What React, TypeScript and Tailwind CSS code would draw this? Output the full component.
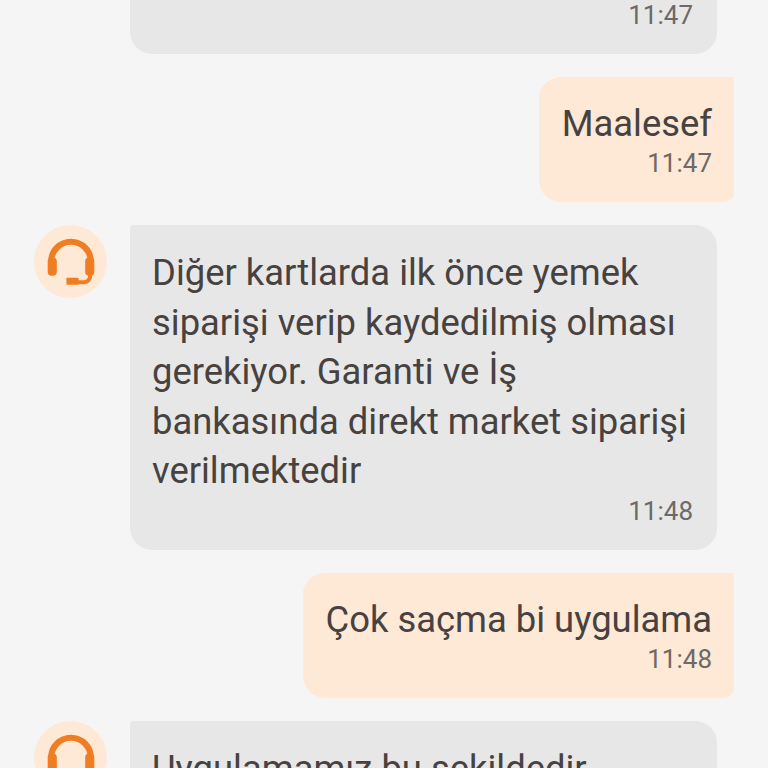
import React from 'react';

const Headset = () => (
  <svg viewBox="0 0 72 72" className="w-[73px] h-[73px]" fill="none">
    <path d="M17 38v-2a19.500 19.500 0 0 1 39 0v2" stroke="#ef7d22" strokeWidth="6" />
    <rect x="13.500" y="32" width="9" height="18" rx="4" fill="#ef7d22" />
    <rect x="50.500" y="32" width="9" height="18" rx="4" fill="#ef7d22" />
    <path d="M55.500 46v4a6.500 6.500 0 0 1-6.500 6.500H42" stroke="#ef7d22" strokeWidth="4" />
    <rect x="32" y="52" width="12" height="7" rx="1" fill="#ef7d22" />
  </svg>
);

const Avatar = () => (
  <div className="w-[73px] h-[73px] shrink-0 rounded-full bg-[#fee8d6]">
    <Headset />
  </div>
);

const Time = ({ children }: { children: string }) => (
  <div className="text-right text-[26px] leading-[30px] text-[#6d6966]">{children}</div>
);

const AgentMessage = ({ lines, time }: { lines: string[]; time: string }) => (
  <div className="flex gap-[23px] pl-[34px] pr-[51px]">
    <Avatar />
    <div className="w-[587px] h-fit rounded-[22px] rounded-tl-[4px] bg-[#e7e7e7] pl-[22px] pr-[24px] pt-[23px] pb-[24px]">
      <div className="text-[36.4px] leading-[49.5px] text-[#47423f]">
        {lines.map((l) => (
          <div key={l}>{l}</div>
        ))}
      </div>
      <Time>{time}</Time>
    </div>
  </div>
);

const UserMessage = ({ text, time }: { text: string; time: string }) => (
  <div className="flex justify-end pr-[34px]">
    <div className="rounded-[22px] rounded-tr-[3px] rounded-br-[10px] bg-[#fee8d6] pl-[23px] pr-[22px] pt-[22px] pb-[24px]">
      <div className="text-[36.4px] leading-[49px] text-[#47423f]">{text}</div>
      <Time>{time}</Time>
    </div>
  </div>
);

export default function App() {
  return (
    <div className="h-[768px] overflow-hidden bg-[#f5f5f5] font-['Roboto',sans-serif] flex flex-col gap-[23px]">
      <div className="pl-[130px] pr-[51px]">
        <div className="h-[54px] rounded-b-[22px] bg-[#e7e7e7] pr-[24px]">
          <Time>11:47</Time>
        </div>
      </div>
      <UserMessage text="Maalesef" time="11:47" />
      <AgentMessage
        lines={[
          'Diğer kartlarda ilk önce yemek',
          'siparişi verip kaydedilmiş olması',
          'gerekiyor. Garanti ve İş',
          'bankasında direkt market siparişi',
          'verilmektedir',
        ]}
        time="11:48"
      />
      <UserMessage text="Çok saçma bi uygulama" time="11:48" />
      <AgentMessage lines={['Uygulamamız bu şekildedir']} time="" />
    </div>
  );
}
